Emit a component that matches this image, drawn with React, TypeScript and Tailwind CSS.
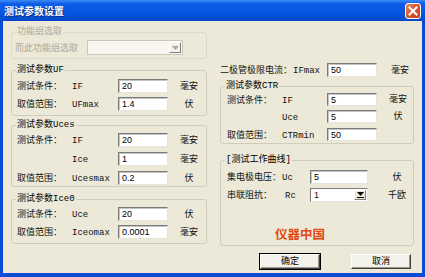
import React from "react";

const T = "font-['Liberation_Mono','Noto_Sans_CJK_SC',monospace] text-[9px] leading-[10px]";

function Field({ value, w = "w-[50px]", h = "h-[14px]" }: { value: string; w?: string; h?: string }) {
  return (
    <div
      className={`${w} ${h} bg-white border border-t-[#7a7a7a] border-l-[#7a7a7a] border-r-[#e6e4da] border-b-[#e6e4da] shadow-[inset_1px_1px_0_#c4c4c4] flex items-center pl-[3px] font-['Liberation_Sans',sans-serif] text-[9px] leading-[10px] text-black`}
    >
      {value}
    </div>
  );
}

function Arrow({ disabled }: { disabled?: boolean }) {
  return (
    <div
      className={`w-[12px] h-full flex flex-col items-center justify-center border border-t-white border-l-white border-r-[#808080] border-b-[#808080] ${disabled ? "bg-[#F3F2EC]" : "bg-[#ECE9D8]"}`}
    >
      <svg width="7" height="4" viewBox="0 0 7 4">
        <polygon points="0,0 7,0 3.5,4" fill={disabled ? "#ACA899" : "#000"} />
      </svg>
      {!disabled && <div className="w-[7px] h-[1px] bg-black mt-[1px]" />}
    </div>
  );
}

function Group({
  title,
  className,
  children,
  disabled,
}: {
  title: string;
  className?: string;
  children?: React.ReactNode;
  disabled?: boolean;
}) {
  return (
    <div
      className={`relative border rounded-[3px] ${disabled ? "border-[#DCDACD]" : "border-[#CFCDBE]"} ${className ?? ""}`}
    >
      <span
        className={`absolute -top-[6px] left-[4px] px-[1px] bg-[#ECE9D8] ${T} ${disabled ? "text-[#ACA899]" : "text-black"}`}
      >
        {title}
      </span>
      {children}
    </div>
  );
}

function LRow({ label, v, value, unit }: { label: string; v: string; value: string; unit: string }) {
  return (
    <div className={`flex items-center h-[14px] ${T} text-[#111]`}>
      <span className="w-[55px] pt-[2px]">{label}</span>
      <span className="w-[46px] pt-[2px]">{v}</span>
      <Field value={value} />
      <span className="w-[18px] ml-[12px] text-center pt-[2px]">{unit}</span>
    </div>
  );
}

function RRow({ label, v, value, unit }: { label: string; v: string; value: string; unit: string }) {
  return (
    <div className={`flex items-center h-[13px] ${T} text-[#111]`}>
      <span className="w-[55px] pt-[2px]">{label}</span>
      <span className="w-[45px] pt-[2px]">{v}</span>
      <Field value={value} h="h-[13px]" />
      <span className="w-[18px] ml-[12px] text-center pt-[1px]">{unit}</span>
    </div>
  );
}

function Button({ label, def }: { label: string; def?: boolean }) {
  return (
    <div
      className={`h-[15px] w-[60px] flex items-center justify-center ${def ? "outline outline-1 outline-black" : ""} bg-[#F2F1EA] border border-t-white border-l-white border-r-[#404040] border-b-[#404040] shadow-[inset_-1px_-1px_0_#9a988c] ${T} text-black`}
    >
      {label}
    </div>
  );
}

export default function App() {
  return (
    <div className="w-[425px] h-[277px] flex flex-col overflow-hidden">
      {/* Title bar */}
      <div className="h-[21px] shrink-0 flex items-center justify-between pl-[4px] pr-[4px] bg-[linear-gradient(to_bottom,#3c8cf8_0%,#0d5ce8_18%,#0656e0_60%,#0447c8_100%)]">
        <span className="font-['Noto_Sans_CJK_SC',sans-serif] text-[10px] leading-[12px] font-bold text-white [text-shadow:1px_1px_0_#0a2a80]">
          测试参数设置
        </span>
        <div className="w-[16px] h-[16px] rounded-[3px] border border-white bg-[linear-gradient(135deg,#ec8a68_0%,#d95a32_45%,#c0401c_100%)] flex items-center justify-center">
          <svg width="10" height="10" viewBox="0 0 10 10">
            <path d="M1.5 1.5 L8.5 8.5 M8.5 1.5 L1.5 8.5" stroke="white" strokeWidth="2" strokeLinecap="square" />
          </svg>
        </div>
      </div>

      {/* Body */}
      <div className="flex-1 flex bg-[#ECE9D8] border-l-[3px] border-r-[3px] border-b-[4px] border-[#0B4BD6]">
        {/* Left column */}
        <div className="w-[196px] ml-[8px] pt-[11px] flex flex-col">
          <Group title="功能组选取" disabled className="h-[27px] pt-[7px] pl-[3px]">
            <div className={`flex items-center h-[15px] ${T}`}>
              <span className="w-[72px] text-[#ACA899] pt-[2px]">而此功能组选取</span>
              <div className="w-[96px] h-[15px] bg-[#F7F6F0] border border-[#C9C7BA] flex justify-end p-[1px]">
                <Arrow disabled />
              </div>
            </div>
          </Group>

          <Group title="测试参数UF" className="mt-[11px] pt-[8px] pb-[4px] pl-[5px] flex flex-col gap-[4px]">
            <LRow label="测试条件：" v="IF" value="20" unit="毫安" />
            <LRow label="取值范围：" v="UFmax" value="1.4" unit="伏" />
          </Group>

          <Group title="测试参数Uces" className="mt-[9px] pt-[7px] pb-[1px] pl-[5px] flex flex-col gap-[5px]">
            <LRow label="测试条件：" v="IF" value="20" unit="毫安" />
            <LRow label="" v="Ice" value="1" unit="毫安" />
            <LRow label="取值范围：" v="Ucesmax" value="0.2" unit="伏" />
          </Group>

          <Group title="测试参数Ice0" className="mt-[12px] pt-[7px] pb-[4px] pl-[5px] flex flex-col gap-[4px]">
            <LRow label="测试条件：" v="Uce" value="20" unit="伏" />
            <LRow label="取值范围：" v="Iceomax" value="0.0001" unit="毫安" />
          </Group>
        </div>

        {/* Right column */}
        <div className="w-[194px] ml-[13px] pt-[42px] flex flex-col">
          <div className={`flex items-center h-[14px] shrink-0 ${T} text-[#111]`}>
            <span className="w-[73px] pt-[2px]">二极管极限电流：</span>
            <span className="w-[34px] pt-[2px]">IFmax</span>
            <Field value="50" />
            <span className="w-[18px] ml-[14px] text-center pt-[2px]">毫安</span>
          </div>

          <Group title="测试参数CTR" className="shrink-0 mt-[9px] pt-[6px] pb-[2px] pl-[6px] flex flex-col">
            <RRow label="测试条件：" v="IF" value="5" unit="毫安" />
            <div className="mt-[4px]">
              <RRow label="" v="Uce" value="5" unit="伏" />
            </div>
            <div className="mt-[5px]">
              <RRow label="取值范围：" v="CTRmin" value="50" unit="" />
            </div>
          </Group>

          <Group title="[测试工作曲线]" className="shrink-0 h-[86px] mt-[16px] pt-[9px] pl-[6px] flex flex-col">
            <div className={`flex items-center h-[14px] shrink-0 ${T} text-[#111]`}>
              <span className="w-[55px] pt-[2px]">集电极电压：</span>
              <span className="w-[28px] pt-[2px]">Uc</span>
              <Field value="5" w="w-[58px]" />
              <span className="w-[20px] ml-[19px] text-center pt-[2px]">伏</span>
            </div>
            <div className={`mt-[4px] shrink-0 flex items-center h-[14px] ${T} text-[#111]`}>
              <span className="w-[55px] pt-[2px]">串联阻抗：</span>
              <span className="w-[28px] pt-[2px] pl-[3px]">Rc</span>
              <div className="w-[58px] h-[14px] bg-white border border-t-[#7a7a7a] border-l-[#7a7a7a] border-r-[#e6e4da] border-b-[#e6e4da] flex items-center justify-between pl-[3px] p-[1px]">
                <span className="font-['Liberation_Sans',sans-serif] text-[9px] leading-[10px]">1</span>
                <Arrow />
              </div>
              <span className="w-[20px] ml-[19px] text-center pt-[2px]">千欧</span>
            </div>
            <div className="flex-1" />
            <div className="shrink-0 mb-[4px] h-[14px] pl-[48px] font-['Noto_Sans_CJK_SC',sans-serif] text-[12.5px] leading-[14px] font-bold text-[#E0480F]">
              仪器中国
            </div>
          </Group>

          <div className="shrink-0 mt-[8px] flex pl-[40px] gap-[31px]">
            <Button label="确定" def />
            <Button label="取消" />
          </div>
        </div>
      </div>
    </div>
  );
}
